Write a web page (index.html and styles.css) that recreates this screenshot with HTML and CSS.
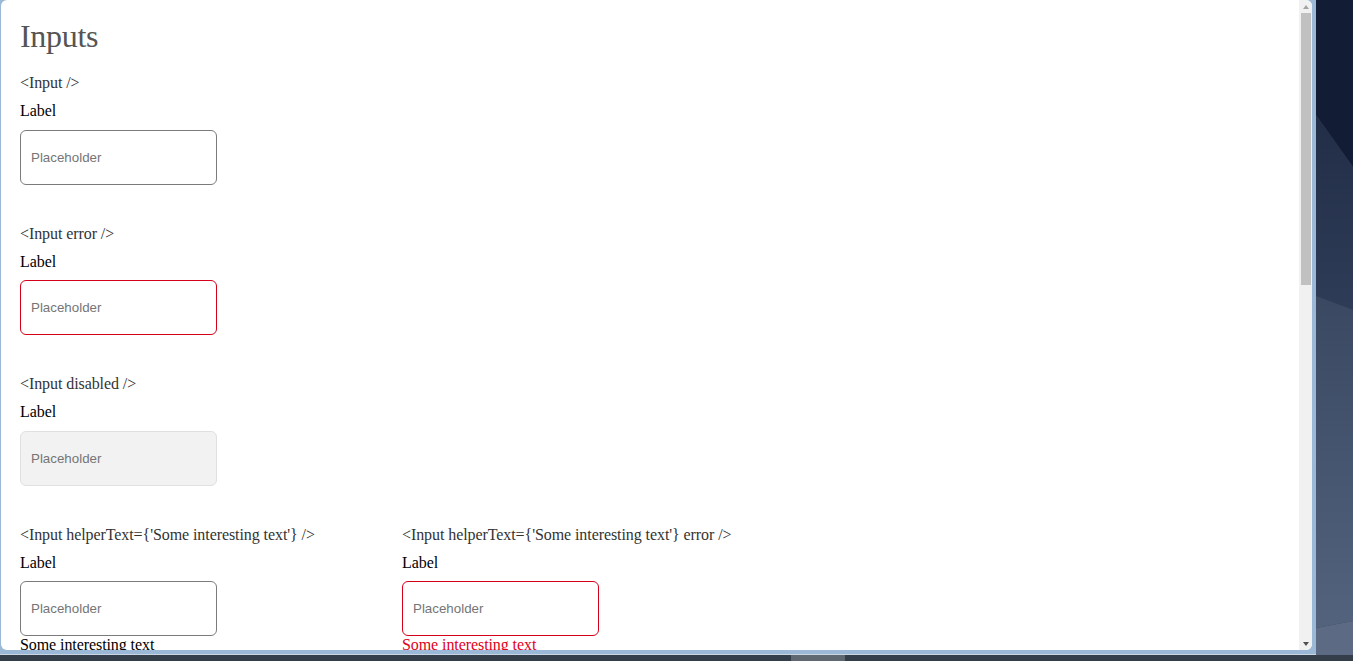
FILE: index.html
```html
<!DOCTYPE html>
<html lang="en">
<head>
<meta charset="utf-8">
<title>Inputs</title>
<link rel="stylesheet" href="styles.css">
</head>
<body>
<div class="screen">
  <div class="top">
    <div class="window">
      <div class="viewport">
        <main class="page">
          <h1 class="title">Inputs</h1>

          <section class="demo">
            <p class="demo-desc">&lt;Input /&gt;</p>
            <div class="field">
              <label class="field-label">Label</label>
              <input class="field-input" type="text" placeholder="Placeholder">
            </div>
          </section>

          <section class="demo">
            <p class="demo-desc">&lt;Input error /&gt;</p>
            <div class="field">
              <label class="field-label">Label</label>
              <input class="field-input is-error" type="text" placeholder="Placeholder">
            </div>
          </section>

          <section class="demo">
            <p class="demo-desc">&lt;Input disabled /&gt;</p>
            <div class="field">
              <label class="field-label">Label</label>
              <input class="field-input" type="text" placeholder="Placeholder" disabled>
            </div>
          </section>

          <div class="demo-row">
            <section class="demo">
              <p class="demo-desc">&lt;Input helperText={'Some interesting text'} /&gt;</p>
              <div class="field">
                <label class="field-label">Label</label>
                <input class="field-input" type="text" placeholder="Placeholder">
                <span class="field-helper">Some interesting text</span>
              </div>
            </section>
            <section class="demo">
              <p class="demo-desc">&lt;Input helperText={'Some interesting text'} error /&gt;</p>
              <div class="field">
                <label class="field-label">Label</label>
                <input class="field-input is-error" type="text" placeholder="Placeholder">
                <span class="field-helper is-error">Some interesting text</span>
              </div>
            </section>
          </div>
        </main>
        <div class="scrollbar">
          <div class="sb-btn"><span class="sb-arrow up"></span></div>
          <div class="sb-thumb"></div>
          <div class="sb-track"></div>
          <div class="sb-btn"><span class="sb-arrow down"></span></div>
        </div>
      </div>
    </div>
    <div class="desktop">
      <svg class="desktop-art" viewBox="0 0 37 655" preserveAspectRatio="none" aria-hidden="true">
        <defs>
          <linearGradient id="g2" x1="0" y1="0" x2="0" y2="1">
            <stop offset="0" stop-color="#222e48"/>
            <stop offset="1" stop-color="#2f3c57"/>
          </linearGradient>
          <linearGradient id="g3" x1="0" y1="0" x2="0" y2="1">
            <stop offset="0" stop-color="#3a4862"/>
            <stop offset="1" stop-color="#53637d"/>
          </linearGradient>
        </defs>
        <polygon points="0,0 37,0 37,167 0,115" fill="#121c34"/>
        <polygon points="0,115 37,167 37,310 0,296" fill="url(#g2)"/>
        <polygon points="0,296 37,310 37,621 0,628" fill="url(#g3)"/>
        <polygon points="0,628 37,621 37,655 0,655" fill="#5c6a84"/>
      </svg>
    </div>
  </div>
  <div class="taskbar">
    <div class="task-gap"></div>
    <div class="task-item"></div>
    <div class="task-rest"></div>
  </div>
</div>
</body>
</html>
```

FILE: styles.css
```css
html, body {
  margin: 0;
  padding: 0;
  width: 1353px;
  height: 661px;
  overflow: hidden;
  background: #343d4a;
}

.screen {
  display: flex;
  flex-direction: column;
  width: 1353px;
  height: 661px;
}

.top {
  display: flex;
  height: 655px;
}

.window {
  width: 1316px;
  box-sizing: border-box;
  padding: 0 4px 4px 1px;
  background: #9bb9d6;
  display: flex;
  border-bottom: 1px solid #c9d6e3;
}

.viewport {
  flex: 1;
  display: flex;
  background: #ffffff;
  border-radius: 6px;
  overflow: hidden;
}

.page {
  flex: 1;
  padding: 18px 19px 0;
  overflow: hidden;
  font-family: "Liberation Serif", "Times New Roman", serif;
  font-size: 16px;
  line-height: 18px;
  letter-spacing: -0.08px;
  color: #000;
}

.title {
  margin: 0 0 20px;
  font-size: 32px;
  line-height: 36px;
  font-weight: 400;
  letter-spacing: -0.3px;
  color: #555555;
}

.demo {
  display: flex;
  flex-direction: column;
  margin-bottom: 40px;
}

.demo-desc {
  margin: 0 0 10px;
  color: #333333;
  white-space: nowrap;
}

.field {
  display: flex;
  flex-direction: column;
  align-items: flex-start;
}

.field-label {
  margin-bottom: 9.5px;
  color: #000;
}

.field-input {
  box-sizing: border-box;
  width: 197px;
  height: 55px;
  margin: 0;
  padding: 0 10px;
  border: 1px solid #7b7b7b;
  border-radius: 6px;
  background: #fff;
  font-family: "Liberation Sans", Arial, sans-serif;
  font-size: 13.333px;
  letter-spacing: 0;
  color: #222;
  outline: none;
}

.field-input::placeholder {
  color: #757575;
}

.field-input.is-error {
  border-color: #d7001b;
}

.field-input:disabled {
  background: #f2f2f2;
  border-color: #e0e0e0;
}

.field-helper {
  color: #000;
}

.field-helper.is-error {
  color: #e0001b;
}

.demo-row {
  display: grid;
  grid-template-columns: 382px auto;
}

/* fake scrollbar */
.scrollbar {
  width: 13px;
  display: flex;
  flex-direction: column;
  background: #f1f1f1;
}

.sb-btn {
  height: 13px;
  display: flex;
  align-items: center;
  justify-content: center;
}

.sb-arrow {
  width: 0;
  height: 0;
  border-left: 3.5px solid transparent;
  border-right: 3.5px solid transparent;
}

.sb-arrow.up {
  border-bottom: 4px solid #a3a3a3;
}

.sb-arrow.down {
  border-top: 4px solid #505050;
}

.sb-thumb {
  height: 272px;
  margin: 0 1px 0 2px;
  background: #c1c1c1;
}

.sb-track {
  flex: 1;
}

.desktop {
  flex: 1;
  display: flex;
}

.desktop-art {
  width: 100%;
  height: 100%;
  display: block;
}

.taskbar {
  height: 6px;
  display: flex;
  background: #343d4a;
}

.task-gap {
  width: 791px;
}

.task-item {
  width: 54px;
  background: #5f6770;
}

.task-rest {
  flex: 1;
}
```
